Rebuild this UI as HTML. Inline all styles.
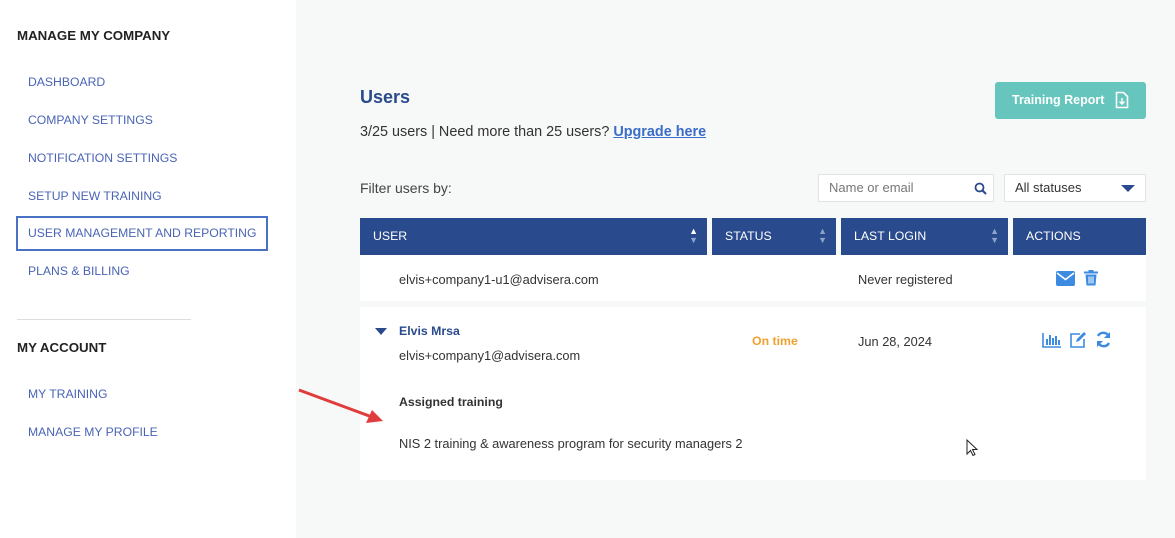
<!DOCTYPE html><html><head><style>
body{margin:0;width:1175px;height:538px;background:#f7f8f8;font-family:"Liberation Sans",sans-serif;position:relative;overflow:hidden}
.a{position:absolute;white-space:nowrap}
.side{position:absolute;left:0;top:0;width:296px;height:538px;background:#fff}
.nav{position:absolute;left:28px;font-size:12.2px;color:#4a64b5}
.h{position:absolute;left:17px;font-size:13.3px;font-weight:bold;color:#222}
.th{position:absolute;top:218px;height:37px;background:#294a8c;color:#fff;font-size:12.3px;line-height:37px;padding-left:13px;box-sizing:border-box}
.sort{position:absolute;right:9px;top:9px;font-size:9px;line-height:9px;color:#8fa2cc}
.sort b{color:#fff;font-weight:normal;display:block}
</style></head><body>
<div class="side"></div>
<div class="h" style="top:28px">MANAGE MY COMPANY</div>
<div class="nav" style="top:75px">DASHBOARD</div>
<div class="nav" style="top:113px">COMPANY SETTINGS</div>
<div class="nav" style="top:151px">NOTIFICATION SETTINGS</div>
<div class="nav" style="top:189px">SETUP NEW TRAINING</div>
<div class="a" style="left:16px;top:216px;width:248px;height:31px;border:2px solid #4a72c4"></div>
<div class="nav" style="top:226px">USER MANAGEMENT AND REPORTING</div>
<div class="nav" style="top:264px">PLANS &amp; BILLING</div>
<div class="a" style="left:17px;top:319px;width:174px;height:1px;background:#ddd"></div>
<div class="h" style="top:340px">MY ACCOUNT</div>
<div class="nav" style="top:387px">MY TRAINING</div>
<div class="nav" style="top:425px">MANAGE MY PROFILE</div>

<div class="a" style="left:360px;top:87px;font-size:18px;font-weight:bold;color:#294a8c">Users</div>
<div class="a" style="left:360px;top:124px;font-size:14.4px;color:#333">3/25 users | Need more than 25 users? <a style="color:#3a6cc8;font-weight:bold;text-decoration:underline">Upgrade here</a></div>
<div class="a" style="left:995px;top:82px;width:151px;height:37px;background:#66c5bd;border-radius:3px;color:#fff;font-weight:bold;font-size:12.5px;line-height:37px;padding-left:17px;box-sizing:border-box">Training Report
<svg style="position:absolute;left:120px;top:9px" width="14" height="18" viewBox="0 0 14 18"><path d="M1.5 1.5h7l4 4v11h-11z" fill="none" stroke="#fff" stroke-width="1.6"/><path d="M7 7v6M4.5 10.5L7 13l2.5-2.5" fill="none" stroke="#fff" stroke-width="1.4"/></svg></div>
<div class="a" style="left:360px;top:180px;font-size:14px;color:#444">Filter users by:</div>
<div class="a" style="left:818px;top:174px;width:176px;height:28px;background:#fff;border:1px solid #e3e3e3;box-sizing:border-box;font-size:13px;color:#777;line-height:26px;padding-left:10px">Name or email
<svg style="position:absolute;left:155px;top:7px" width="13" height="13" viewBox="0 0 13 13"><circle cx="5.5" cy="5.5" r="4" fill="none" stroke="#294a8c" stroke-width="1.8"/><path d="M8.5 8.5L12 12" stroke="#294a8c" stroke-width="2"/></svg></div>
<div class="a" style="left:1004px;top:174px;width:142px;height:28px;background:#fff;border:1px solid #e3e3e3;box-sizing:border-box;font-size:13px;color:#333;line-height:26px;padding-left:10px">All statuses
<svg style="position:absolute;left:116px;top:10px" width="14" height="8"><path d="M0 0h14L7 7z" fill="#294a8c"/></svg></div>

<div class="th" style="left:360px;width:347px">USER<div class="sort"><b>▲</b>▼</div></div>
<div class="th" style="left:712px;width:124px">STATUS<div class="sort">▲<br>▼</div></div>
<div class="th" style="left:841px;width:167px">LAST LOGIN<div class="sort">▲<br>▼</div></div>
<div class="th" style="left:1013px;width:133px">ACTIONS</div>

<div class="a" style="left:360px;top:255px;width:786px;height:46px;background:#fff"></div>
<div class="a" style="left:399px;top:272px;font-size:12.8px;color:#333">elvis+company1-u1@advisera.com</div>
<div class="a" style="left:858px;top:272px;font-size:12.8px;color:#333">Never registered</div>
<svg class="a" style="left:1056px;top:271px" width="19" height="15" viewBox="0 0 19 15"><rect width="19" height="15" rx="2" fill="#3c8be0"/><path d="M1 2l8.5 6.5L18 2" fill="none" stroke="#fff" stroke-width="1.6"/></svg>
<svg class="a" style="left:1084px;top:270px" width="14" height="16" viewBox="0 0 14 16"><rect x="0" y="1.5" width="14" height="2" fill="#3c8be0"/><rect x="4.5" y="0" width="5" height="2" fill="#3c8be0"/><path d="M1.5 4.5h11l-1 11h-9z" fill="#3c8be0"/><path d="M5 6.5v7M7 6.5v7M9 6.5v7" stroke="#fff" stroke-width="1"/></svg>

<div class="a" style="left:360px;top:307px;width:786px;height:173px;background:#fff"></div>
<svg class="a" style="left:375px;top:328px" width="12" height="7"><path d="M0 0h12L6 7z" fill="#294a8c"/></svg>
<div class="a" style="left:399px;top:324px;font-size:12.3px;font-weight:bold;color:#294a8c">Elvis Mrsa</div>
<div class="a" style="left:399px;top:348px;font-size:12.8px;color:#333">elvis+company1@advisera.com</div>
<div class="a" style="left:752px;top:334px;font-size:12.3px;font-weight:bold;color:#f0a030">On time</div>
<div class="a" style="left:858px;top:334px;font-size:12.8px;color:#333">Jun 28, 2024</div>
<svg class="a" style="left:1042px;top:332px" width="20" height="16" viewBox="0 0 20 16"><path d="M1 1v14h18" fill="none" stroke="#3c8be0" stroke-width="1.6"/><path d="M5 13V7M8 13V3M11 13V6M14 13V4M17 13V8" stroke="#3c8be0" stroke-width="2"/></svg>
<svg class="a" style="left:1069px;top:331px" width="18" height="17" viewBox="0 0 18 17"><path d="M11 3H2v13h13V8" fill="none" stroke="#3c8be0" stroke-width="1.6"/><path d="M7 11l1-3 7-7 2 2-7 7z" fill="#3c8be0"/></svg>
<svg class="a" style="left:1095px;top:331px" width="17" height="17" viewBox="0 0 17 17"><path d="M14 6A6 6 0 0 0 3 5M3 11a6 6 0 0 0 11 1" fill="none" stroke="#3c8be0" stroke-width="2.4"/><path d="M15 1v6H9zM2 16v-6h6z" fill="#3c8be0"/></svg>
<div class="a" style="left:399px;top:395px;font-size:12.3px;font-weight:bold;color:#333">Assigned training</div>
<div class="a" style="left:399px;top:436px;font-size:12.8px;color:#333">NIS 2 training &amp; awareness program for security managers 2</div>
<svg class="a" style="left:296px;top:386px" width="92" height="40"><path d="M3 4L76 31" stroke="#e03c3c" stroke-width="3"/><path d="M87 35L70 37L76 24z" fill="#e03c3c"/></svg>
<svg class="a" style="left:966px;top:439px" width="12" height="18"><path d="M1 1v14l3.5-3.5 2.5 5 2-1-2.5-5H11z" fill="#fff" stroke="#222" stroke-width="1"/></svg>
</body></html>
